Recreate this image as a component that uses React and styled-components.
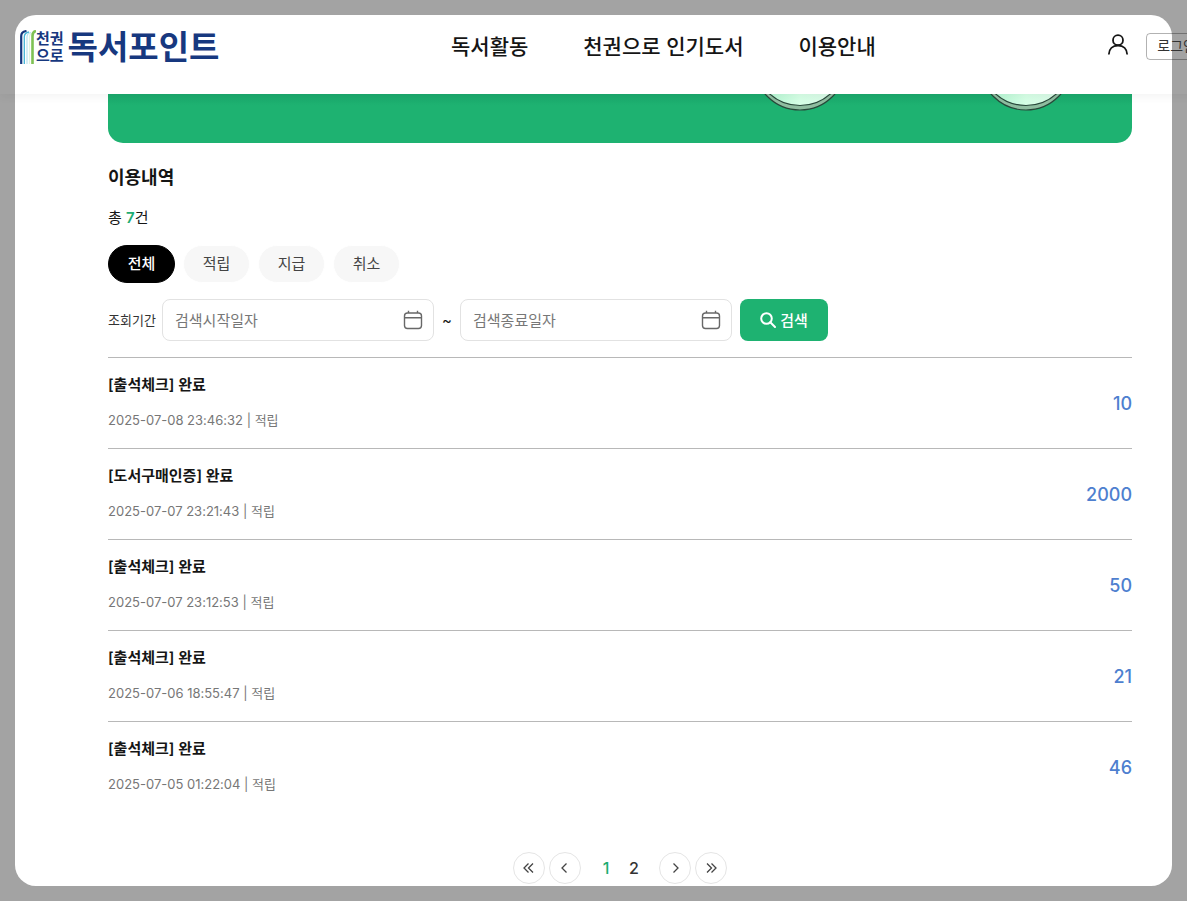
import React, { useState } from 'react';
import styled, { createGlobalStyle } from 'styled-components';

const menus = ['독서활동', '천권으로 인기도서', '이용안내'];
const filters = ['전체', '적립', '지급', '취소'];

const histories = [
    { title: '[출석체크] 완료', date: '2025-07-08 23:46:32', type: '적립', point: 10 },
    { title: '[도서구매인증] 완료', date: '2025-07-07 23:21:43', type: '적립', point: 2000 },
    { title: '[출석체크] 완료', date: '2025-07-07 23:12:53', type: '적립', point: 50 },
    { title: '[출석체크] 완료', date: '2025-07-06 18:55:47', type: '적립', point: 21 },
    { title: '[출석체크] 완료', date: '2025-07-05 01:22:04', type: '적립', point: 46 },
];

const BookIcon = () => (
    <svg width="16" height="34" viewBox="0 0 16 34" fill="none" aria-hidden="true">
        <path d="M1.2 34V6C1.200 3 3 1.500 6.500 1" stroke="#17387f" strokeWidth="2.2" />
        <path d="M4.300 34V7C4.300 4 6 2.500 9 2" stroke="#45b5d8" strokeWidth="1.3" />
        <path d="M7 34V7C7 4.500 8.500 3 11 2.500" stroke="#b5e2ee" strokeWidth="1.1" />
        <path d="M9.500 34V7C9.500 4.500 10.500 3.500 12.500 3" stroke="#e0f2e4" strokeWidth="1.1" />
        <path d="M12.500 34V6C12.500 3 13.500 1.500 16 1" stroke="#7fc153" strokeWidth="2.6" />
    </svg>
);

const UserIcon = () => (
    <svg width="22" height="22" viewBox="0 0 22 22" fill="none" stroke="#151515" strokeWidth="1.8" aria-hidden="true">
        <circle cx="11" cy="6.2" r="5" />
        <path d="M1.8 20.500c.2-5.500 3.800-9 9.200-9s9 3.500 9.200 9" />
    </svg>
);

const CalendarIcon = () => (
    <svg width="20" height="20" viewBox="0 0 20 20" fill="none" stroke="#686868" strokeWidth="1.4" aria-hidden="true">
        <rect x="1.5" y="3" width="17" height="15.5" rx="3" />
        <path d="M1.5 7.7h17M5.5 .8V3M14.5 .8V3" />
    </svg>
);

const SearchIcon = () => (
    <svg width="16" height="16" viewBox="0 0 16 16" fill="none" stroke="#fff" strokeWidth="2" aria-hidden="true">
        <circle cx="6.5" cy="6.5" r="5.3" />
        <path d="M10.3 10.3L15 15" strokeLinecap="round" />
    </svg>
);

const Chevron = ({ double, right }) => (
    <svg width="12" height="12" viewBox="0 0 12 12" fill="none" stroke="#444" strokeWidth="1.3" aria-hidden="true">
        <g transform={right ? 'rotate(180 6 6)' : undefined}>
            {double ? <path d="M5.5 1.5L1 6L5.5 10.5M10 1.5L5.5 6L10 10.5" /> : <path d="M7.5 1.5L3 6L7.5 10.5" />}
        </g>
    </svg>
);

const Coin = () => (
    <svg width="96" height="18" viewBox="0 0 96 18" aria-hidden="true">
        <defs>
            <linearGradient id="coinFace" x1="0" y1="0" x2="1" y2="0">
                <stop offset="0.2" stopColor="#b9f7d5" />
                <stop offset="0.5" stopColor="#d6ffe6" />
                <stop offset="0.8" stopColor="#d9fae7" />
            </linearGradient>
        </defs>
        <circle cx="48" cy="-30" r="46" fill="#8fbda0" stroke="#28483a" strokeWidth="1.2" />
        <circle cx="48" cy="-34" r="45.5" fill="url(#coinFace)" stroke="#28483a" strokeWidth="1.2" />
    </svg>
);

const DateField = ({ id, label }) => (
    <DateBox>
        <DateInput id={id} type="text" placeholder={label} aria-label={label} />
        <CalendarIcon />
    </DateBox>
);

const App = () => {
    const [filter, setFilter] = useState('전체');
    const [page, setPage] = useState(1);

    return (
        <Page>
            <GlobalStyle />
            <Card>
                <Header>
                    <Logo href="#">
                        <BookIcon />
                        <LogoMark>
                            <span>천권</span>
                            <span>으로</span>
                        </LogoMark>
                        <LogoText>독서포인트</LogoText>
                    </Logo>
                    <Nav>
                        {menus.map((menu) => (
                            <NavLink key={menu} href="#">{menu}</NavLink>
                        ))}
                    </Nav>
                    <UserMenu>
                        <UserLink href="#" aria-label="마이페이지"><UserIcon /></UserLink>
                        <LoginButton type="button">로그인</LoginButton>
                    </UserMenu>
                </Header>
                <Content>
                    <Banner>
                        <Coin />
                        <Coin />
                    </Banner>
                    <Title>이용내역</Title>
                    <Total>총 <strong>7</strong>건</Total>
                    <Filters>
                        {filters.map((name) => (
                            <FilterButton key={name} type="button" $active={name === filter} onClick={() => setFilter(name)}>
                                {name}
                            </FilterButton>
                        ))}
                    </Filters>
                    <SearchForm onSubmit={(e) => e.preventDefault()}>
                        <PeriodLabel htmlFor="start">조회기간</PeriodLabel>
                        <DateField id="start" label="검색시작일자" />
                        <Tilde>~</Tilde>
                        <DateField id="end" label="검색종료일자" />
                        <SearchButton type="submit"><SearchIcon />검색</SearchButton>
                    </SearchForm>
                    <List>
                        {histories.map((item) => (
                            <Item key={item.date}>
                                <ItemText>
                                    <ItemTitle>{item.title}</ItemTitle>
                                    <ItemDate>{item.date} | {item.type}</ItemDate>
                                </ItemText>
                                <Point>{item.point}</Point>
                            </Item>
                        ))}
                    </List>
                    <Pagination aria-label="페이지">
                        <ArrowButton type="button" aria-label="처음" onClick={() => setPage(1)}><Chevron double /></ArrowButton>
                        <ArrowButton type="button" aria-label="이전" onClick={() => setPage(1)}><Chevron /></ArrowButton>
                        <Numbers>
                            {[1, 2].map((n) => (
                                <PageButton key={n} type="button" $active={n === page} onClick={() => setPage(n)}>{n}</PageButton>
                            ))}
                        </Numbers>
                        <ArrowButton type="button" aria-label="다음" onClick={() => setPage(2)}><Chevron right /></ArrowButton>
                        <ArrowButton type="button" aria-label="마지막" onClick={() => setPage(2)}><Chevron double right /></ArrowButton>
                    </Pagination>
                </Content>
            </Card>
        </Page>
    );
};

export default App;

const GlobalStyle = createGlobalStyle`
    * {
        box-sizing: border-box;
    }
    body {
        margin: 0;
        background: #a3a3a3;
        color: #151515;
        font-family: Inter, "Noto Sans CJK KR", sans-serif;
    }
    button, input {
        font-family: inherit;
    }
    button {
        cursor: pointer;
    }
    a {
        color: inherit;
        text-decoration: none;
    }
`;

const Page = styled.div`
    padding: 15px;
    overflow: hidden;
`;

const Card = styled.div`
    min-height: calc(100vh - 30px);
    background: #fff;
    border-radius: 21px;
`;

/* wider than the card, the login button runs over its right edge */
const Header = styled.header`
    display: flex;
    align-items: center;
    justify-content: space-between;
    height: 79px;
    margin: 0 -35px 0 -15px;
    padding: 0 0 16px 20px;
    box-shadow: 0 4px 8px rgba(0, 0, 0, 0.04);
    clip-path: inset(0 0 -20px 0);
`;

const Logo = styled.a`
    display: flex;
    align-items: center;
    color: #17387f;
`;

const LogoMark = styled.span`
    display: flex;
    flex-direction: column;
    font-size: 15px;
    font-weight: 700;
    line-height: 17px;
`;

const LogoText = styled.span`
    margin-left: 4px;
    font-size: 33px;
    font-weight: 700;
    line-height: 40px;
`;

const Nav = styled.nav`
    display: flex;
    gap: 55px;
`;

const NavLink = styled.a`
    font-size: 21px;
    font-weight: 500;
    line-height: 30px;
`;

const UserMenu = styled.div`
    display: flex;
    align-items: center;
    gap: 17px;
`;

const UserLink = styled.a`
    display: flex;
    padding-bottom: 3px;
`;

const LoginButton = styled.button`
    height: 27px;
    padding: 0 10px 2px;
    border: 1px solid rgba(0, 0, 0, 0.3);
    border-radius: 4px;
    background: transparent;
    color: #333;
    font-size: 14px;
    line-height: 20px;
`;

const Content = styled.main`
    padding: 0 40px 0 93px;
`;

const Banner = styled.div`
    display: flex;
    justify-content: flex-end;
    gap: 130px;
    height: 49px;
    padding-right: 58px;
    border-radius: 0 0 15px 15px;
    background: linear-gradient(#1ba96c, #1eb271 12px);
`;

const Title = styled.h2`
    margin: 21px 0 0;
    font-size: 18px;
    font-weight: 700;
    line-height: 28px;
`;

const Total = styled.p`
    margin: 15px 0 0;
    font-size: 15px;
    line-height: 22px;

    strong {
        color: #1eac72;
        font-weight: 600;
    }
`;

const Filters = styled.div`
    display: flex;
    gap: 8px;
    margin-top: 16px;
`;

const FilterButton = styled.button`
    width: 67px;
    height: 38px;
    padding: 0 0 3px;
    border: 1px solid ${(props) => (props.$active ? '#000' : '#fff')};
    border-radius: 19px;
    background: ${(props) => (props.$active ? '#000' : '#f7f7f7')};
    color: ${(props) => (props.$active ? '#fff' : '#444')};
    font-size: 15px;
    font-weight: ${(props) => (props.$active ? 500 : 400)};
`;

const SearchForm = styled.form`
    display: flex;
    align-items: center;
    margin: 16px 0;
`;

const PeriodLabel = styled.label`
    width: 54px;
    padding-bottom: 2px;
    color: #333;
    font-size: 13px;
`;

const DateBox = styled.div`
    display: flex;
    align-items: center;
    width: 272px;
    height: 42px;
    padding: 0 10px 0 12px;
    border: 1px solid #e2e2e2;
    border-radius: 8px;
`;

const DateInput = styled.input`
    flex: 1;
    min-width: 0;
    padding: 0;
    border: 0;
    outline: 0;
    background: transparent;
    font-size: 15px;

    &::placeholder {
        color: #777;
        opacity: 1;
    }
`;

const Tilde = styled.span`
    width: 26px;
    font-size: 15px;
    text-align: center;
`;

const SearchButton = styled.button`
    display: flex;
    align-items: center;
    justify-content: center;
    gap: 4px;
    width: 88px;
    height: 42px;
    margin-left: 8px;
    padding: 0 0 1px;
    border: 0;
    border-radius: 8px;
    background: #1eb271;
    color: #fff;
    font-size: 15px;
    font-weight: 500;
`;

const List = styled.ul`
    margin: 0;
    padding: 0;
    list-style: none;
`;

const Item = styled.li`
    display: flex;
    align-items: center;
    justify-content: space-between;
    height: 91px;
    border-top: 1px solid #b8b8b8;
`;

const ItemText = styled.div`
    padding-bottom: 3px;
`;

const ItemTitle = styled.h3`
    margin: 0;
    font-size: 15px;
    font-weight: 600;
    line-height: 24px;
`;

const ItemDate = styled.p`
    margin: 13px 0 0;
    color: #777;
    font-size: 13px;
    line-height: 20px;
`;

const Point = styled.strong`
    color: #4e7fcf;
    font-size: 18px;
    font-weight: 500;
`;

const Pagination = styled.nav`
    display: flex;
    justify-content: center;
    gap: 4px;
    margin-top: 40px;
`;

const ArrowButton = styled.button`
    display: flex;
    align-items: center;
    justify-content: center;
    width: 32px;
    height: 32px;
    padding: 0;
    border: 1px solid #e5e5e5;
    border-radius: 50%;
    background: #fff;
`;

const Numbers = styled.div`
    display: flex;
    padding: 0 7px;
`;

const PageButton = styled.button`
    width: 28px;
    height: 32px;
    padding: 0;
    border: 0;
    background: transparent;
    color: ${(props) => (props.$active ? '#1eac72' : '#333')};
    font-size: 16px;
    font-weight: 500;
`;
